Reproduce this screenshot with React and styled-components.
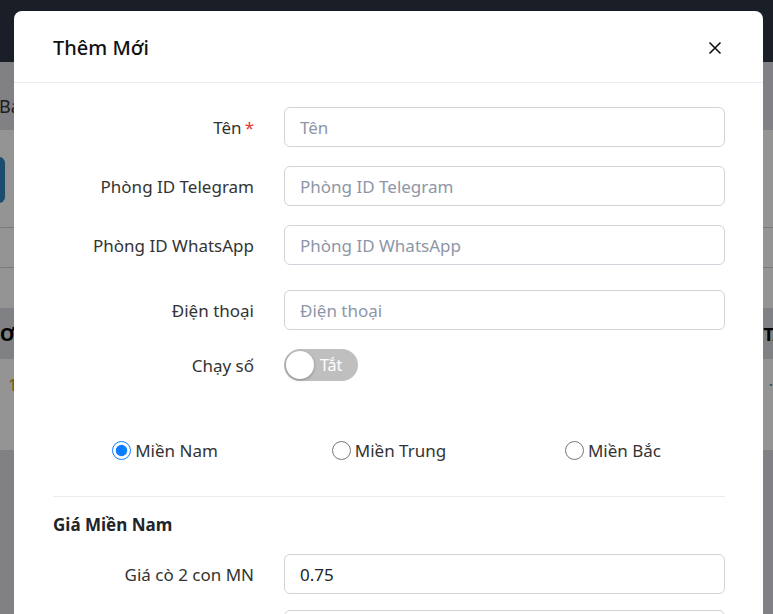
import styled, { createGlobalStyle } from 'styled-components';

const GlobalStyle = createGlobalStyle`
  html, body {
    margin: 0;
    padding: 0;
    height: 100%;
    overflow: hidden;
  }
  body {
    font-family: 'Noto Sans', 'Open Sans', sans-serif;
    font-size: 17px;
    color: #212529;
  }
`;

// ---- page behind the modal ----
const Page = styled.div`
  height: 614px;
  background: #dcdce5;
  overflow: hidden;
`;
const Navbar = styled.div`
  height: 62px;
  background: #2e3443;
`;
const Breadcrumb = styled.div`
  height: 68px;
  box-sizing: border-box;
  padding-top: 20px;
  display: flex;
  align-items: center;
  margin-left: -1px;
  color: #333;
  font-size: 18px;
`;
const Card = styled.div`
  background: #fff;
`;
const Toolbar = styled.div`
  padding: 27px 0 24px;
  border-bottom: 1px solid #d4d4d4;
`;
const BlueButton = styled.div`
  width: 65px;
  height: 46px;
  margin-left: -60px;
  border-radius: 6px;
  background: #3086be;
`;
const FilterBar = styled.div`
  height: 39px;
  border-bottom: 1px solid #d4d4d4;
`;
const TableWrap = styled.div`
  padding-top: 40px;
`;
const HeadRow = styled.div`
  height: 51px;
  display: flex;
  align-items: center;
  justify-content: space-between;
  background: #dcdfe3;
  font-weight: 700;
  font-size: 18px;
  color: #000;
`;
const BodyRow = styled.div`
  height: 91px;
  display: flex;
  align-items: flex-start;
  justify-content: space-between;
  padding-top: 14px;
  box-sizing: border-box;
`;
const Cell = styled.span`
  margin: ${(p) => p.$margin || '0'};
  color: ${(p) => p.$color || 'inherit'};
`;

// ---- modal ----
const Overlay = styled.div`
  position: fixed;
  inset: 0;
  background: rgba(0, 0, 0, 0.42);
  overflow: hidden;
`;
const Dialog = styled.div`
  width: 749px;
  margin: 11px 0 0 14px;
  background: #fff;
  border-radius: 8px;
`;
const Header = styled.div`
  height: 72px;
  box-sizing: border-box;
  padding: 2px 41px 0 39px;
  display: flex;
  align-items: center;
  justify-content: space-between;
  border-bottom: 1px solid #e9ecef;
`;
const Title = styled.h5`
  margin: 0;
  font-size: 20px;
  font-weight: 500;
  color: #111;
`;
const CloseButton = styled.button`
  border: 0;
  background: none;
  padding: 0;
  width: 14px;
  height: 14px;
  display: flex;
  cursor: pointer;
`;
const Body = styled.div`
  padding: 24px 38px 40px 39px;
`;
const Row = styled.div`
  display: grid;
  grid-template-columns: 201px 1fr;
  column-gap: 30px;
  align-items: center;
  margin-bottom: ${(p) => p.$mb ?? 19}px;
`;
const Label = styled.label`
  text-align: right;
  color: #333;
  font-size: 17px;
`;
const Required = styled.span`
  color: #e53935;
  margin-left: 3px;
`;
const Input = styled.input`
  box-sizing: border-box;
  height: 40px;
  width: 100%;
  padding: 0 15px;
  border: 1px solid #ced4da;
  border-radius: 6px;
  font-family: inherit;
  font-size: 17px;
  color: #212529;
  outline: none;
  &::placeholder {
    color: #8d96a7;
  }
`;
const Switch = styled.div`
  position: relative;
  width: 74px;
  height: 32px;
  border-radius: 16px;
  background: #bfbfbf;
  display: flex;
  align-items: center;
  padding-left: 36px;
  box-sizing: border-box;
  color: #fff;
  font-size: 16px;
`;
const Knob = styled.span`
  position: absolute;
  left: 2px;
  top: 2px;
  width: 28px;
  height: 28px;
  border-radius: 50%;
  background: #fff;
  box-shadow: 0 1px 3px rgba(0, 0, 0, 0.3);
`;
const RadioGroup = styled.div`
  display: grid;
  grid-template-columns: repeat(3, 1fr);
  justify-items: center;
  align-items: center;
  height: 24px;
  margin-top: 57px;
  padding-left: ${(p) => p.$shift || 0}px;
`;
const RadioOption = styled.label`
  display: flex;
  align-items: center;
  gap: 4px;
  color: #333;
  font-size: 17px;
`;
const Radio = styled.input`
  width: 19px;
  height: 19px;
  margin: 0;
  accent-color: #0a7cff;
`;
const Divider = styled.hr`
  border: 0;
  border-top: 1px solid #e9ecef;
  margin: 34px 0 16px;
`;
const SectionTitle = styled.h6`
  margin: 0 0 17px;
  font-size: 17px;
  line-height: 24px;
  font-weight: 700;
  color: #212529;
`;

function App() {
  return (
    <>
      <GlobalStyle />
      <Page>
        <Navbar />
        <Breadcrumb>Bạn đang ở đây</Breadcrumb>
        <Card>
          <Toolbar>
            <BlueButton />
          </Toolbar>
          <FilterBar />
          <TableWrap>
            <HeadRow>
              <Cell>Ơ</Cell>
              <Cell $margin="0 -12px 0 0">TÁ</Cell>
            </HeadRow>
            <BodyRow>
              <Cell $margin="0 0 0 8px" $color="#c8960a">1</Cell>
              <Cell $color="#2aa198">·</Cell>
            </BodyRow>
          </TableWrap>
        </Card>
      </Page>
      <Overlay>
        <Dialog>
          <Header>
            <Title>Thêm Mới</Title>
            <CloseButton aria-label="Đóng">
              <svg width="14" height="14" viewBox="0 0 14 14">
                <path d="M1.5 1.5 L12.5 12.5 M12.5 1.5 L1.5 12.5" stroke="#111" strokeWidth="1.6" />
              </svg>
            </CloseButton>
          </Header>
          <Body>
            <Row>
              <Label>
                Tên<Required>*</Required>
              </Label>
              <Input placeholder="Tên" />
            </Row>
            <Row>
              <Label>Phòng ID Telegram</Label>
              <Input placeholder="Phòng ID Telegram" />
            </Row>
            <Row $mb={25}>
              <Label>Phòng ID WhatsApp</Label>
              <Input placeholder="Phòng ID WhatsApp" />
            </Row>
            <Row>
              <Label>Điện thoại</Label>
              <Input placeholder="Điện thoại" />
            </Row>
            <Row $mb={0}>
              <Label>Chạy số</Label>
              <Switch>
                <Knob />
                Tắt
              </Switch>
            </Row>
            <RadioGroup>
              <RadioOption>
                <Radio type="radio" name="region" defaultChecked />
                Miền Nam
              </RadioOption>
              <RadioOption>
                <Radio type="radio" name="region" />
                Miền Trung
              </RadioOption>
              <RadioOption>
                <Radio type="radio" name="region" />
                Miền Bắc
              </RadioOption>
            </RadioGroup>
            <Divider />
            <SectionTitle>Giá Miền Nam</SectionTitle>
            <Row $mb={16}>
              <Label>Giá cò 2 con MN</Label>
              <Input defaultValue="0.75" />
            </Row>
            <Row>
              <Label>Giá cò 3 con MN</Label>
              <Input defaultValue="0.75" />
            </Row>
          </Body>
        </Dialog>
      </Overlay>
    </>
  );
}

export default App;
